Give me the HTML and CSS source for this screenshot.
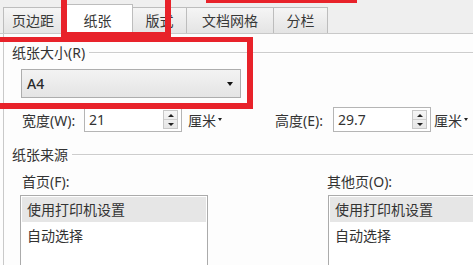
FILE: index.html
```html
<!DOCTYPE html>
<html lang="zh-CN">
<head>
<meta charset="utf-8">
<title>页面设置 - 纸张</title>
<link rel="stylesheet" href="styles.css">
</head>
<body>
<div class="dialog">
  <div class="tabs">
    <div class="tab t1">页边距</div>
    <div class="tab t2 active">纸张</div>
    <div class="tab t3">版式</div>
    <div class="tab t4">文档网格</div>
    <div class="tab t5">分栏</div>
  </div>
  <div class="panel">
    <div class="group-head"><span>纸张大小(R)</span><i class="rule"></i></div>
    <div class="combo"><span class="combo-text">A4</span><b class="caret"></b></div>
    <div class="size-row">
      <span class="lbl lw">宽度(W):</span>
      <div class="spin"><span class="spin-val">21</span><div class="spin-btns"><i class="half"><b class="up"></b></i><i class="half"><b class="down"></b></i></div></div>
      <span class="unit">厘米<b class="mini-caret"></b></span>
      <span class="lbl lh">高度(E):</span>
      <div class="spin"><span class="spin-val">29.7</span><div class="spin-btns"><i class="half"><b class="up"></b></i><i class="half"><b class="down"></b></i></div></div>
      <span class="unit unit2">厘米<b class="mini-caret"></b></span>
    </div>
    <div class="group-head g2"><span>纸张来源</span><i class="rule"></i></div>
    <div class="source">
      <div class="col col1">
        <div class="col-lbl">首页(F):</div>
        <div class="list">
          <div class="item sel">使用打印机设置</div>
          <div class="item">自动选择</div>
        </div>
      </div>
      <div class="col col2">
        <div class="col-lbl">其他页(O):</div>
        <div class="list">
          <div class="item sel">使用打印机设置</div>
          <div class="item">自动选择</div>
        </div>
      </div>
    </div>
  </div>
</div>
<div class="mark m-tab"></div>
<div class="mark m-size"></div>
<div class="mark m-top"></div>
</body>
</html>
```

FILE: styles.css
```css
html, body {
  margin: 0;
  padding: 0;
}
body {
  width: 473px;
  height: 265px;
  overflow: hidden;
  position: relative;
  background: #fdfdfd;
  font-family: "Noto Sans", "Noto Sans CJK SC", sans-serif;
  font-size: 14px;
  color: #333333;
}
.dialog {
  width: 473px;
  height: 265px;
  display: flex;
  flex-direction: column;
  overflow: hidden;
}
.tabs {
  height: 33px;
  background: #efefef;
  border-bottom: 1px solid #c9c9c9;
  display: flex;
  align-items: flex-end;
  padding-left: 3px;
  flex: none;
}
.tab {
  box-sizing: border-box;
  height: 26px;
  line-height: 25px;
  text-align: center;
  border: 1px solid #bdbdbd;
  border-bottom: none;
  margin-right: -1px;
  background: linear-gradient(#f5f5f5, #e4e4e4);
  color: #383838;
}
.t1 { width: 60px; }
.t2 { width: 71px; }
.t3 { width: 55px; }
.t4 { width: 88px; }
.t5 { width: 55px; }
.tab.active {
  height: 30px;
  margin-bottom: -1px;
  padding-top: 3px;
  background: #ffffff;
  position: relative;
  z-index: 1;
}
.panel {
  flex: 1;
  margin-left: 3px;
  border-left: 1px solid #c9c9c9;
  padding-left: 8px;
  padding-top: 9px;
  background: #fdfdfd;
  min-height: 0;
}
.group-head {
  height: 20px;
  line-height: 20px;
  display: flex;
  align-items: center;
}
.rule {
  flex: 1;
  margin-left: 4px;
  margin-top: -1px;
  border-top: 1px solid #cdcdcd;
  border-bottom: 1px solid #ffffff;
}
.combo {
  box-sizing: border-box;
  margin-top: 6px;
  margin-left: 9px;
  width: 220px;
  height: 29px;
  border: 1px solid #adadad;
  background: linear-gradient(#f3f3f3, #e4e4e4);
  display: flex;
  align-items: center;
  padding-left: 5px;
  padding-right: 7px;
}
.combo-text {
  flex: 1;
  font-weight: 500;
  color: #2a2a2a;
}
.caret {
  width: 0;
  height: 0;
  border-left: 3.5px solid transparent;
  border-right: 3.5px solid transparent;
  border-top: 4px solid #111;
}
.size-row {
  margin-top: 9px;
  height: 25px;
  display: flex;
  align-items: center;
  padding-left: 10px;
}
.lbl {
  white-space: nowrap;
}
.lw { width: 62px; }
.lh { width: 58px; margin-left: 53px; }
.spin {
  box-sizing: border-box;
  width: 98px;
  height: 25px;
  border: 1px solid #b5b5b5;
  background: #fff;
  display: flex;
  align-items: center;
  padding-left: 4px;
  padding-right: 3px;
}
.spin-val {
  flex: 1;
}
.spin-btns {
  box-sizing: border-box;
  width: 15px;
  height: 19px;
  border: 1px solid #c8c8c8;
  background: linear-gradient(#f6f6f6, #e6e6e6);
  display: flex;
  flex-direction: column;
}
.half {
  flex: 1;
  display: flex;
  align-items: center;
  justify-content: center;
}
.half + .half {
  border-top: 1px solid #cfcfcf;
}
.up {
  width: 0;
  height: 0;
  border-left: 3px solid transparent;
  border-right: 3px solid transparent;
  border-bottom: 3px solid #222;
}
.down {
  width: 0;
  height: 0;
  border-left: 3px solid transparent;
  border-right: 3px solid transparent;
  border-top: 3px solid #222;
}
.unit {
  margin-left: 6px;
  white-space: nowrap;
  display: flex;
  align-items: center;
  width: 34px;
}
.unit2 { margin-left: 3px; }
.mini-caret {
  margin-left: 2px;
  width: 0;
  height: 0;
  border-left: 2.5px solid transparent;
  border-right: 2.5px solid transparent;
  border-top: 3px solid #222;
}
.g2 {
  margin-top: 13px;
}
.source {
  display: flex;
  align-items: flex-start;
}
.col1 {
  margin-left: 8px;
  width: 188px;
  flex: none;
}
.col2 {
  margin-left: 119px;
  width: 146px;
  flex: none;
}
.col-lbl {
  margin-top: 7px;
  height: 20px;
  line-height: 20px;
  padding-left: 2px;
  white-space: nowrap;
}
.col2 .col-lbl { padding-left: 0; }
.list {
  box-sizing: border-box;
  margin-top: 3px;
  height: 70px;
  border: 1px solid #ababab;
  border-bottom: none;
  background: #fff;
  padding: 1px 1px 0 1px;
}
.col2 .list {
  margin-left: 1px;
  border-right: none;
  padding-right: 0;
}
.item {
  height: 28px;
  line-height: 28px;
  padding-left: 5px;
  white-space: nowrap;
}
.item.sel {
  height: 25px;
  line-height: 25px;
  background: #e6e6e6;
}
.mark {
  position: absolute;
  box-sizing: border-box;
  border: 6px solid #e8222a;
  z-index: 5;
}
.m-tab {
  left: 61px;
  top: -10px;
  width: 110px;
  height: 47px;
  border-bottom-width: 5px;
}
.m-size {
  left: -6px;
  top: 37px;
  width: 259px;
  height: 72px;
  border-top-width: 5px;
}
.m-top {
  left: 206px;
  top: -10px;
  width: 151px;
  height: 13px;
  border-width: 3px;
}
```
